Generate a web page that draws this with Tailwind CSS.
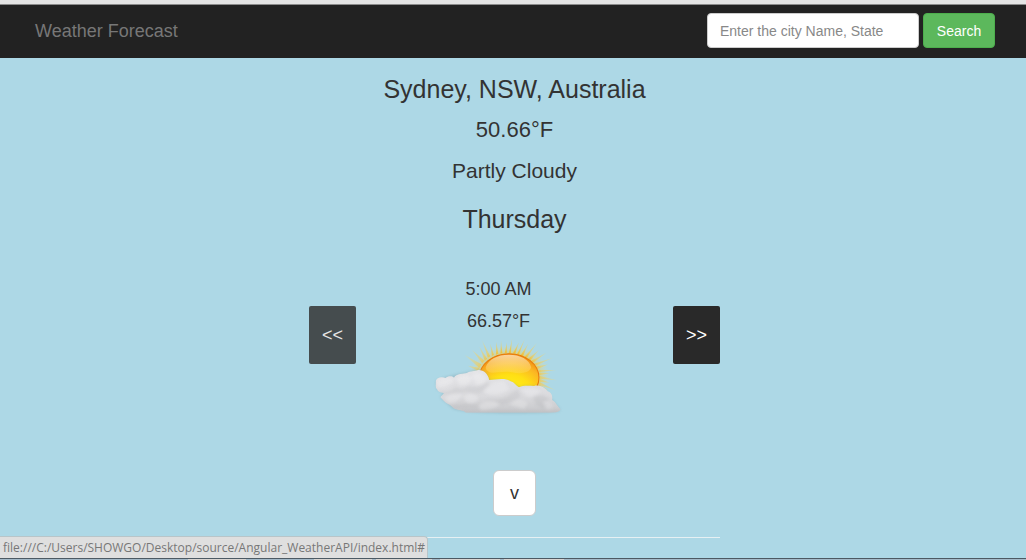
<!DOCTYPE html>
<html lang="en">
<head>
<meta charset="utf-8">
<meta name="viewport" content="width=device-width, initial-scale=1">
<title>Weather Forecast</title>
<script src="https://cdn.jsdelivr.net/npm/@tailwindcss/browser@4"></script>
</head>
<body class="relative flex min-h-screen flex-col overflow-x-hidden bg-[#add8e6] font-['Liberation_Sans',Arial,sans-serif] text-[#333333]">
  <div class="h-[5px] border-b border-[#8b8b8b] bg-[#e4e4e4]"></div>
  <nav class="flex h-[53px] items-center justify-between bg-[#222222] pr-[31px] pb-0.5 pl-[35px]">
    <a href="#" class="text-lg leading-5 text-[#777777]">Weather Forecast</a>
    <form class="flex items-center gap-1">
      <input type="text" aria-label="City name and state" placeholder="Enter the city Name, State" class="h-[35px] w-[212px] rounded border border-[#cccccc] bg-white px-3 text-sm text-[#555555] placeholder:text-[#888888]">
      <button type="button" class="h-[35px] w-[72px] rounded border border-[#4cae4c] bg-[#5cb85c] text-sm text-white">Search</button>
    </form>
  </nav>

  <main class="flex flex-col items-center pt-[15px] pl-[3px] text-center">
    <h1 class="text-[25px] leading-8">Sydney, NSW, Australia</h1>
    <p class="mt-[9px] text-[22px] leading-8">50.66°F</p>
    <p class="mt-[9px] text-[21px] leading-8">Partly Cloudy</p>
    <h2 class="mt-4 text-[25px] leading-8">Thursday</h2>

    <section class="mt-[38px] flex w-[411px] max-w-full items-start justify-between">
      <button type="button" aria-label="Previous" class="mt-[33px] h-[58px] w-[47px] rounded-xs bg-[#454c4e] text-lg text-[#e6e6e6]">&lt;&lt;</button>
      <div class="flex flex-col items-center pr-8">
        <p class="text-lg leading-8">5:00 AM</p>
        <p class="text-lg leading-8">66.57°F</p>
        <svg class="h-20 w-[132px]" viewBox="45 200 390 240" preserveAspectRatio="none" role="img" aria-label="Partly cloudy">
          <defs>
            <radialGradient id="sun" cx=".5" cy=".8" r=".8">
              <stop offset="0" stop-color="#fff21a"/><stop offset=".45" stop-color="#ffe014"/><stop offset=".75" stop-color="#fbb624"/><stop offset="1" stop-color="#ed820c"/>
            </radialGradient>
            <radialGradient id="glow">
              <stop offset=".65" stop-color="#fbc62c" stop-opacity=".8"/><stop offset=".82" stop-color="#f0d468" stop-opacity=".35"/><stop offset="1" stop-color="#e8dc9a" stop-opacity="0"/>
            </radialGradient>
            <radialGradient id="rays" gradientUnits="userSpaceOnUse" cx="270" cy="320" r="150">
              <stop offset=".5" stop-color="#f7bd22" stop-opacity=".8"/><stop offset=".65" stop-color="#edcd60" stop-opacity=".65"/><stop offset="1" stop-color="#e6dc9a" stop-opacity=".4"/>
            </radialGradient>
            <linearGradient id="shine" x2="0" y2="1">
              <stop offset="0" stop-color="#fff3dc" stop-opacity=".7"/><stop offset="1" stop-color="#ffe37a" stop-opacity=".25"/>
            </linearGradient>
            <linearGradient id="cloud" x2="0" y2="1">
              <stop offset="0" stop-color="#e6e6e9"/><stop offset=".6" stop-color="#dadadd"/><stop offset="1" stop-color="#c4c5c8"/>
            </linearGradient>
            <filter id="soft" x="-30%" y="-30%" width="160%" height="160%"><feGaussianBlur stdDeviation="5"/></filter>
            <clipPath id="cloudClip"><path d="M53 332C55 321 71 318 82 323C90 316 102 317 107 322C113 309 138 311 145 308C155 301 169 304 178 299C194 298 208 310 211 329C232 328 257 320 274 333C286 336 290 346 299 351C313 344 330 347 344 347C358 342 378 353 384 363C399 367 398 384 397 389C410 397 411 407 422 417C420 424 410 427 394 427L142 427C135 418 119 422 105 413C101 408 94 402 88 400C80 397 73 387 67 381C70 374 76 373 77 368C67 367 58 363 57 357C50 350 54 342 53 332Z"/></clipPath>
          </defs>
          <ellipse cx="271" cy="316" rx="118" ry="92" fill="url(#glow)"/>
          <path fill="url(#rays)" d="M188 282L139 254L181 292L148 286L177 301ZM197 271L160 238L190 279ZM205 265L182 229L198 271ZM214 258L190 210L207 262ZM225 253L214 220L219 257ZM238 250L232 214L231 253ZM250 249L246 210L244 250ZM263 248L263 216L257 249ZM275 248L279 204L269 249ZM288 250L299 216L281 249ZM299 253L316 207L293 252ZM311 258L326 220L304 255ZM322 263L352 218L315 260ZM332 271L358 239L325 266ZM340 278L380 247L333 273ZM346 287L400 262L341 281ZM352 297L386 282L347 289ZM356 306L410 299L353 299ZM358 315L393 308L356 307ZM359 325L411 330L358 316ZM358 334L390 337L359 325ZM357 343L407 360L358 334ZM352 350L386 360L357 342Z"/>
          <ellipse cx="270" cy="322" rx="88" ry="72" fill="url(#sun)" stroke="#e87909" stroke-width="3"/>
          <path fill="url(#shine)" d="M201 290C209 267 235 253 269 253C303 253 330 267 335 291C331 308 304 312 279 306C253 301 235 308 219 307C208 305 200 299 201 290Z"/>
          <path fill="#69858e" opacity=".3" filter="url(#soft)" d="M53 332C80 316 145 308 178 299C194 298 208 310 211 329C232 328 274 326 299 351C330 340 378 345 397 389L422 420C410 432 150 433 105 415L67 381L77 368L57 357Z"/>
          <g clip-path="url(#cloudClip)">
            <path fill="url(#cloud)" d="M45 290H430V435H45Z"/>
            <g filter="url(#soft)" opacity=".35">
              <path fill="#f5f5f7" d="M55 333Q80 311 108 329Q94 351 60 352ZM112 325Q142 301 160 322Q157 347 124 344ZM158 317Q179 293 204 323Q200 341 174 345Z"/>
              <path fill="#b9babd" opacity=".8" d="M57 359Q84 375 112 350Q133 362 149 346Q178 356 209 333L213 352Q180 378 148 366Q114 366 75 373Z"/>
              <path fill="#f3f3f5" d="M78 382Q101 368 132 373Q119 398 92 399ZM135 380Q158 358 181 384Q170 403 144 397ZM193 363Q217 332 255 333L272 355Q244 381 204 371ZM305 358Q338 345 364 362Q354 378 324 379Z"/>
              <path fill="#b5b6ba" opacity=".75" d="M89 404Q123 406 146 397Q187 410 209 386Q250 393 278 367L296 356L304 379Q273 400 235 405Q185 417 150 414L106 418Z"/>
              <path fill="#eeeeef" d="M178 406Q211 380 244 402Q220 420 188 419ZM270 402Q297 376 326 398L313 416Z"/>
              <path fill="#b2b3b7" opacity=".8" d="M340 381Q370 365 388 388L370 417L350 403ZM130 419H422V434H130Z"/>
              <path fill="#e7e7ea" d="M370 395Q391 384 401 409L384 420Z"/>
            </g>
          </g>
        </svg>
      </div>
      <button type="button" aria-label="Next" class="mt-[33px] h-[58px] w-[47px] rounded-xs bg-[#292929] text-lg text-white">&gt;&gt;</button>
    </section>

    <button type="button" class="mt-[53px] h-[46px] w-[43px] rounded-md border border-[#cccccc] bg-white text-lg">v</button>
    <hr class="mt-[21px] w-[411px] max-w-full border-[#e6f0f3]">
  </main>

  <div class="absolute bottom-0.5 left-0 flex h-[22px] items-center rounded-tr border-t border-r border-[#b8c5c9] bg-[#dfdfdf] pr-0.5 pl-[3px] font-['Open_Sans',sans-serif] text-xs leading-4 text-[#777777]">file:///C:/Users/SHOWGO/Desktop/source/Angular_WeatherAPI/index.html#</div>
  <!-- Top edge of the taskbar with its window buttons -->
  <div class="absolute inset-x-0 bottom-0 flex h-0.5 border-t border-[#4c5963] bg-[#a3b9c8] pl-[188px]">
    <div class="mr-[68px] h-px w-[58px] bg-[#d9d5d2]"></div>
    <div class="mr-1 h-px w-[58px] bg-[#d9d5d2]"></div>
    <div class="mr-2 h-px w-[56px] bg-[#d9d5d2]"></div>
    <div class="mr-1 h-px w-[60px] bg-[#d9d5d2]"></div>
    <div class="h-px w-[60px] bg-[#d9d5d2]"></div>
  </div>
</body>
</html>
